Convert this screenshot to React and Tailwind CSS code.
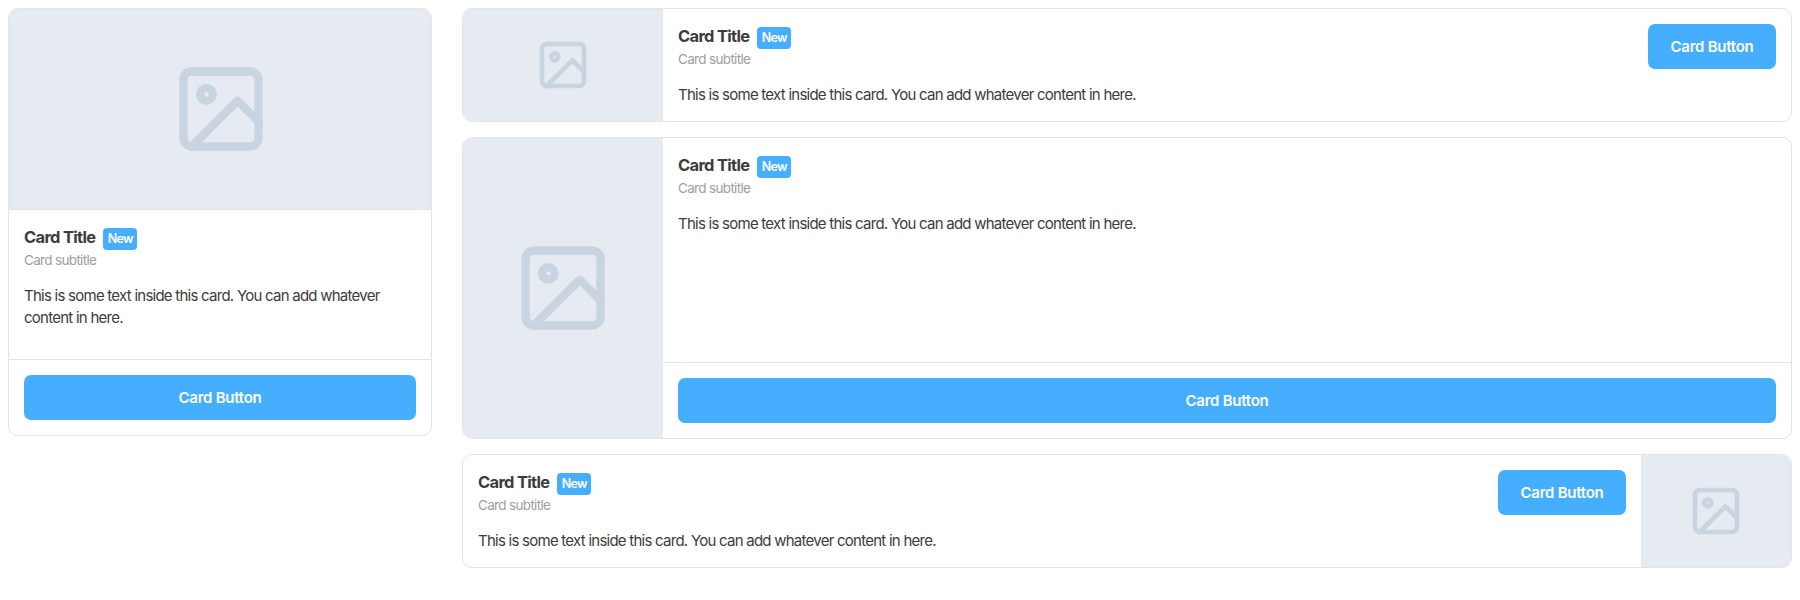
function ImageIcon({ className }) {
  return (
    <svg
      className={className}
      viewBox="0 0 24 24"
      fill="none"
      stroke="currentColor"
      strokeWidth="2"
      strokeLinecap="round"
      strokeLinejoin="round"
    >
      <rect x="3" y="3" width="18" height="18" rx="2" ry="2" />
      <circle cx="8.5" cy="8.5" r="1.5" />
      <polyline points="21 15 16 10 5 21" />
    </svg>
  );
}

function Media({ className, iconClassName }) {
  return (
    <div className={`flex shrink-0 items-center justify-center bg-[#e6ebf2] text-[#c8d4e0] ${className}`}>
      <ImageIcon className={`shrink-0 ${iconClassName}`} />
    </div>
  );
}

function CardButton({ className }) {
  return (
    <button
      type="button"
      className={`h-[45px] rounded-[7px] bg-[#45aeff] text-[15px] leading-[22px] font-semibold tracking-[-0.27px] text-white ${className}`}
    >
      Card Button
    </button>
  );
}

function CardText() {
  return (
    <div className="min-w-0">
      <div className="flex h-[26px] items-start gap-[7.5px]">
        <h2 className="pt-[1px] text-[16.5px] leading-[22px] font-bold tracking-[-0.69px]">Card Title</h2>
        <span className="mt-[3px] h-[22px] rounded-[4px] bg-[#45aeff] px-[4.75px] text-[12.5px] leading-[22px] font-semibold tracking-[-0.7px] text-white">
          New
        </span>
      </div>
      <p className="text-[13.5px] leading-[19px] tracking-[-0.67px] text-[#9d9fa3]">Card subtitle</p>
      <p className="pt-[15px] text-[15px] leading-[22px] tracking-[-0.75px]">
        This is some text inside this card. You can add whatever content in here.
      </p>
    </div>
  );
}

function Card({ className, children }) {
  return (
    <article className={`flex overflow-hidden rounded-[10px] border border-[#e4e4e4] bg-white ${className}`}>
      {children}
    </article>
  );
}

export default function App() {
  return (
    <main className="flex h-[600px] w-[1800px] items-start gap-[30px] bg-white p-2 font-['Inter',sans-serif] text-[#3c3c3c]">
      <Card className="h-[428px] w-[424px] shrink-0 flex-col">
        <Media className="h-[201px] border-b border-[#e4e4e4] pl-0.5" iconClassName="size-[100px]" />
        <div className="flex-1 p-[15px]">
          <CardText />
        </div>
        <div className="border-t border-[#e4e4e4] p-[15px]">
          <CardButton className="block w-full" />
        </div>
      </Card>

      <div className="flex flex-1 flex-col gap-[15px]">
        <Card className="h-[114px]">
          <Media className="w-[200px]" iconClassName="size-14" />
          <div className="flex flex-1 items-start justify-between p-[15px]">
            <CardText />
            <CardButton className="w-32" />
          </div>
        </Card>

        <Card className="h-[302px]">
          <Media className="w-[200px]" iconClassName="size-[100px]" />
          <div className="flex flex-1 flex-col">
            <div className="flex-1 p-[15px]">
              <CardText />
            </div>
            <div className="border-t border-[#e4e4e4] p-[15px]">
              <CardButton className="block w-full" />
            </div>
          </div>
        </Card>

        <Card className="h-[114px]">
          <div className="flex flex-1 items-start justify-between p-[15px]">
            <CardText />
            <CardButton className="w-32" />
          </div>
          <Media className="w-[150px]" iconClassName="size-14" />
        </Card>
      </div>
    </main>
  );
}
